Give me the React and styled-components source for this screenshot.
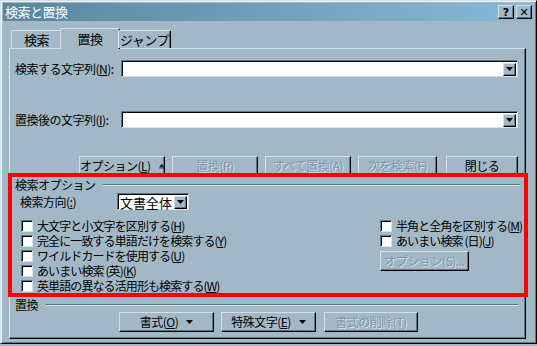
import React from 'react'
import styled, { createGlobalStyle } from 'styled-components'

const BG = '#a2b8c6'
const HI = '#d4e1e9'
const SH = '#5f7888'
const DK = '#000'
const FONT = '"Noto Sans CJK JP", "DejaVu Sans", sans-serif'

const GlobalStyle = createGlobalStyle`
  html, body {
    margin: 0;
    padding: 0;
    background: ${BG};
  }
  body {
    font-family: ${FONT};
    font-size: 12px;
    line-height: 14px;
    color: #000;
  }
`

const Window = styled.div`
  width: 537px;
  height: 344px;
  box-sizing: border-box;
  background: ${BG};
  border-top: 1px solid ${HI};
  border-left: 1px solid ${HI};
  border-right: 1px solid ${DK};
  border-bottom: 1px solid ${DK};
  box-shadow: inset 1px 1px 0 #eef4f8, inset -1px -1px 0 ${SH};
  padding: 2px;
  display: flex;
  flex-direction: column;
`

const TitleBar = styled.div`
  height: 18px;
  display: flex;
  align-items: center;
  justify-content: space-between;
  padding: 0 2px 0 2px;
  background: linear-gradient(to right, #5a869e, #7aaac6 70%, #88bada);
  color: #fff;
  font-size: 13px;
`

const TitleText = styled.span`
  line-height: 18px;
  letter-spacing: -0.5px;
`

const CaptionButtons = styled.div`
  display: flex;
  gap: 2px;
`

const CaptionButton = styled.div`
  width: 16px;
  height: 14px;
  box-sizing: border-box;
  background: ${BG};
  border-top: 1px solid ${HI};
  border-left: 1px solid ${HI};
  border-right: 1px solid ${DK};
  border-bottom: 1px solid ${DK};
  box-shadow: inset -1px -1px 0 ${SH};
  display: flex;
  align-items: center;
  justify-content: center;
  color: #000;
  font-family: "DejaVu Sans", sans-serif;
  font-weight: bold;
  font-size: 11px;
  line-height: 1;
`

const TabRow = styled.div`
  display: flex;
  align-items: flex-end;
  height: 20px;
  margin-top: 7px;
  padding-left: 8px;
  position: relative;
  z-index: 2;
`

const Tab = styled.div`
  height: ${p => (p.$active ? 21 : 18)}px;
  width: ${p => p.$w}px;
  box-sizing: border-box;
  margin: 0 ${p => (p.$active ? -2 : 0)}px ${p => (p.$active ? -1 : 0)}px;
  background: ${BG};
  border-top: 1px solid ${HI};
  border-left: 1px solid ${HI};
  border-right: 1px solid ${DK};
  box-shadow: inset -1px 0 0 ${SH};
  border-radius: 2px 2px 0 0;
  display: flex;
  align-items: center;
  justify-content: center;
  font-size: 13px;
  white-space: nowrap;
  letter-spacing: -0.5px;
  padding-top: ${p => (p.$active ? 0 : 1)}px;
`

const Panel = styled.div`
  margin-left: 6px;
  width: 517px;
  height: 291px;
  box-sizing: border-box;
  border-top: 1px solid ${HI};
  border-left: 1px solid ${HI};
  border-right: 1px solid ${DK};
  border-bottom: 1px solid ${DK};
  box-shadow: inset -1px -1px 0 ${SH};
  padding: 11px 7px 0 5px;
  display: flex;
  flex-direction: column;
`

const FieldRow = styled.div`
  display: flex;
  align-items: center;
  height: 17px;
  margin-top: ${p => p.$top || 0}px;
`

const FieldLabel = styled.label`
  width: 106px;
  white-space: nowrap;
  letter-spacing: -0.5px;
`

const Combo = styled.div`
  width: ${p => p.$w}px;
  height: 17px;
  box-sizing: border-box;
  background: #fff;
  border-top: 1px solid ${SH};
  border-left: 1px solid ${SH};
  border-right: 1px solid ${HI};
  border-bottom: 1px solid ${HI};
  box-shadow: inset 1px 1px 0 ${DK};
  display: flex;
  align-items: center;
  justify-content: space-between;
  padding: 1px 1px 0 2px;
  font-size: ${p => p.$fs || 12}px;
  line-height: 15px;
  white-space: nowrap;
`

const ComboButton = styled.div`
  width: 13px;
  height: 13px;
  flex: none;
  box-sizing: border-box;
  background: ${BG};
  border-top: 1px solid ${HI};
  border-left: 1px solid ${HI};
  border-right: 1px solid ${DK};
  border-bottom: 1px solid ${DK};
  box-shadow: inset -1px -1px 0 ${SH};
  display: flex;
  align-items: center;
  justify-content: center;
`

const ButtonRow = styled.div`
  display: flex;
  margin-top: ${p => p.$top || 0}px;
  margin-left: ${p => p.$left || 0}px;
`

const Button = styled.div`
  width: ${p => p.$w}px;
  height: 20px;
  margin-left: ${p => p.$gap || 0}px;
  box-sizing: border-box;
  background: ${BG};
  border-top: 1px solid ${HI};
  border-left: 1px solid ${HI};
  border-right: 1px solid ${DK};
  border-bottom: 1px solid ${DK};
  box-shadow: inset -1px -1px 0 ${SH};
  display: flex;
  align-items: center;
  justify-content: center;
  gap: 8px;
  font-size: 12px;
  white-space: nowrap;
  color: ${p => (p.$disabled ? '#7f97a7' : '#000')};
  text-shadow: ${p => (p.$disabled ? `1px 1px 0 ${HI}` : 'none')};
  letter-spacing: -0.5px;
`

const Highlight = styled.section`
  margin: -3px -10px 0 -7px;
  height: 124px;
  box-sizing: border-box;
  border: 4px solid #ff0000;
  position: relative;
  z-index: 1;
  padding: 1px 4px 0 3px;
  display: flex;
  flex-direction: column;
`

const GroupHeader = styled.div`
  display: flex;
  align-items: center;
  height: 14px;
  margin-top: ${p => p.$top || 0}px;
  white-space: nowrap;
  letter-spacing: -0.5px;
`

const Rule = styled.div`
  flex: 1;
  margin-left: ${p => p.$gap}px;
  border-top: 1px solid ${SH};
  border-bottom: 1px solid ${HI};
`

const DirectionRow = styled.div`
  display: flex;
  align-items: center;
  height: 17px;
  margin-top: 1px;
  padding-left: 5px;
`

const DirectionLabel = styled.span`
  width: 97px;
  white-space: nowrap;
  letter-spacing: -0.5px;
`

const Columns = styled.div`
  display: flex;
  margin-top: 8px;
  padding-left: 6px;
`

const Column = styled.div`
  display: flex;
  flex-direction: column;
  width: ${p => p.$w}px;
`

const CheckRow = styled.label`
  display: flex;
  align-items: center;
  height: 15px;
  gap: 4px;
  white-space: nowrap;
  letter-spacing: -0.9px;
`

const Box = styled.span`
  width: 12px;
  height: 12px;
  box-sizing: border-box;
  background: #fff;
  border-top: 1px solid ${SH};
  border-left: 1px solid ${SH};
  border-right: 1px solid ${HI};
  border-bottom: 1px solid ${HI};
  box-shadow: inset 1px 1px 0 ${DK};
  flex: none;
`

const DownArrow = () => (
  <svg width='7' height='4' viewBox='0 0 7 4'>
    <path d='M0 0h7L3.5 4z' fill='#000' />
  </svg>
)

const UpArrow = () => (
  <svg width='7' height='6' viewBox='0 0 7 6'>
    <path d='M0.5 4h6L3.5 0.5z' fill='#000' />
    <rect x='0' y='5' width='7' height='1' fill='#000' />
  </svg>
)

const Check = ({ label, accel }) => (
  <CheckRow>
    <Box />
    <span>{label}(<u>{accel}</u>)</span>
  </CheckRow>
)

export default function App () {
  return (
    <>
      <GlobalStyle />
      <Window>
        <TitleBar>
          <TitleText>検索と置換</TitleText>
          <CaptionButtons>
            <CaptionButton>?</CaptionButton>
            <CaptionButton>✕</CaptionButton>
          </CaptionButtons>
        </TitleBar>

        <TabRow>
          <Tab $w={51}>検索</Tab>
          <Tab $w={60} $active>置換</Tab>
          <Tab $w={53}>ジャンプ</Tab>
        </TabRow>

        <Panel>
          <FieldRow>
            <FieldLabel>検索する文字列(<u>N</u>):</FieldLabel>
            <Combo $w={397}>
              <span />
              <ComboButton><DownArrow /></ComboButton>
            </Combo>
          </FieldRow>
          <FieldRow $top={34}>
            <FieldLabel>置換後の文字列(<u>I</u>):</FieldLabel>
            <Combo $w={397}>
              <span />
              <ComboButton><DownArrow /></ComboButton>
            </Combo>
          </FieldRow>

          <ButtonRow $top={28} $left={64}>
            <Button $w={86}>
              <span>オプション(<u>L</u>)</span>
              <UpArrow />
            </Button>
            <Button $w={86} $gap={7} $disabled>置換(R)</Button>
            <Button $w={86} $gap={7} $disabled>すべて置換(A)</Button>
            <Button $w={79} $gap={7} $disabled>次を検索(F)</Button>
            <Button $w={72} $gap={9}>閉じる</Button>
          </ButtonRow>

          <Highlight>
            <GroupHeader>
              <span>検索オプション</span>
              <Rule $gap={7} />
            </GroupHeader>
            <DirectionRow>
              <DirectionLabel>検索方向(<u>:</u>)</DirectionLabel>
              <Combo $w={72} $fs={13}>
                <span>文書全体</span>
                <ComboButton><DownArrow /></ComboButton>
              </Combo>
            </DirectionRow>
            <Columns>
              <Column $w={360}>
                <Check label='大文字と小文字を区別する' accel='H' />
                <Check label='完全に一致する単語だけを検索する' accel='Y' />
                <Check label='ワイルドカードを使用する' accel='U' />
                <Check label='あいまい検索 (英)' accel='K' />
                <Check label='英単語の異なる活用形も検索する' accel='W' />
              </Column>
              <Column $w={140}>
                <Check label='半角と全角を区別する' accel='M' />
                <Check label='あいまい検索 (日)' accel='J' />
                <ButtonRow $top={3}>
                  <Button $w={89} $disabled>オプション(S)...</Button>
                </ButtonRow>
              </Column>
            </Columns>
          </Highlight>

          <GroupHeader $top={1}>
            <span>置換</span>
            <Rule $gap={8} />
          </GroupHeader>
          <ButtonRow $top={0} $left={104}>
            <Button $w={95}>
              <span>書式(<u>O</u>)</span>
              <DownArrow />
            </Button>
            <Button $w={95} $gap={7}>
              <span>特殊文字(<u>E</u>)</span>
              <DownArrow />
            </Button>
            <Button $w={94} $gap={8} $disabled>書式の削除(T)</Button>
          </ButtonRow>
        </Panel>
      </Window>
    </>
  )
}
